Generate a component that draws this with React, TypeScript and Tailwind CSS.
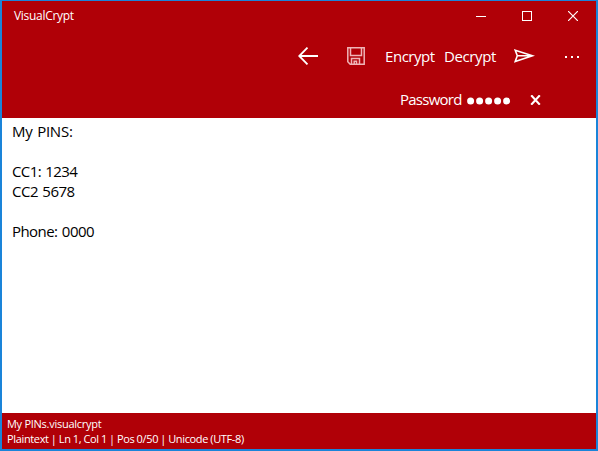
const font = "font-['Open_Sans','Noto_Sans',sans-serif]";

function TitleBar() {
  return (
    <div className="flex h-[30px] items-center">
      <span className="ml-3 w-[100px] text-[12px] leading-[30px] tracking-[-0.3px] whitespace-nowrap">VisualCrypt</span>
      <div className="mr-[18px] ml-auto flex items-center gap-9">
        <svg width="10" height="10" shapeRendering="crispEdges"><path d="M0 5h10v1H0z" fill="#fff" /></svg>
        <svg width="10" height="10" shapeRendering="crispEdges"><path d="M.5 .5h9v9h-9z" fill="none" stroke="#fff" /></svg>
        <svg width="10" height="10"><path d="M0 0L10 10M10 0L0 10" stroke="#fff" strokeWidth="1.2" /></svg>
      </div>
    </div>
  );
}

function CommandBar() {
  return (
    <div className="flex h-[50px] items-center text-[15px]">
      <svg className="ml-[296px] shrink-0" width="20" height="18" fill="none" stroke="#fff" strokeWidth="1.8">
        <path d="M1 9H20M9.5 .6L1.2 9l8.3 8.4" />
      </svg>
      <svg className="ml-[29px] shrink-0" width="18" height="18" fill="none" stroke="#efb4b7" strokeWidth="1.5">
        <path d="M.8 .8h16.4v16.4H3.2L.8 14.8zM3.5 .7v7.8h11V.7M4.5 17v-5.5h8V17M7.2 17v-2.8h2.3V17" />
      </svg>
      <span className="ml-5 w-[59px] tracking-[-0.45px] whitespace-nowrap">Encrypt</span>
      <span className="w-[70px] tracking-[-0.4px] whitespace-nowrap">Decrypt</span>
      <svg className="-mt-[1px] shrink-0" width="21" height="14" fill="none" stroke="#fff" strokeWidth="1.6">
        <path d="M1.2 1.2L18.5 6.8L1.2 12.5L3.3 6.8zM3.3 6.8H18" />
      </svg>
      <svg className="mt-[2px] ml-[30px] shrink-0" width="14" height="2" fill="#fff" shapeRendering="crispEdges">
        <path d="M0 0h2v2H0zM6 0h2v2H6zM12 0h2v2h-2z" />
      </svg>
    </div>
  );
}

function PasswordBar() {
  return (
    <div className="flex h-[37px] items-center text-[15px]">
      <span className="ml-[398px] w-[67px] shrink-0 tracking-[-0.75px] whitespace-nowrap">Password</span>
      <svg className="mt-[2px] shrink-0" width="44" height="8" fill="#fff">
        <circle cx="3.6" cy="4" r="3.5" /><circle cx="12.6" cy="4" r="3.5" /><circle cx="21.6" cy="4" r="3.5" />
        <circle cx="30.6" cy="4" r="3.5" /><circle cx="39.6" cy="4" r="3.5" />
      </svg>
      <svg className="ml-[19px] shrink-0" width="11" height="10"><path d="M1.2 .3L9.8 9.7M9.8 .3L1.2 9.7" stroke="#fff" strokeWidth="2.1" /></svg>
    </div>
  );
}

export default function App() {
  return (
    <div className={`flex h-[451px] w-[598px] flex-col border-x-2 border-t border-b-2 border-[#1a84d9] bg-white ${font}`}>
      <header className="h-[117px] bg-[#b00007] text-white">
        <TitleBar />
        <CommandBar />
        <PasswordBar />
      </header>
      <main className="flex-1 pt-[3px] pl-[10px] text-[15px] leading-5 whitespace-nowrap text-black">
        <p className="tracking-[-0.25px] [word-spacing:1px]">My PINS:</p>
        <p className="mt-5 tracking-[-0.6px] [word-spacing:1px]">CC1: 1234</p>
        <p className="tracking-[-0.5px] [word-spacing:1px]">CC2 5678</p>
        <p className="mt-5 tracking-[-0.55px] [word-spacing:1px]">Phone: 0000</p>
      </main>
      <footer className="h-9 bg-[#b00007] pt-[3px] pl-[5px] text-[11px] leading-[15px] whitespace-nowrap text-white">
        <div className="tracking-[-0.27px]">My PINs.visualcrypt</div>
        <div className="tracking-[-0.35px] [word-spacing:-0.3px]">Plaintext | Ln 1, Col 1 | Pos 0/50 | Unicode (UTF-8)</div>
      </footer>
    </div>
  );
}
